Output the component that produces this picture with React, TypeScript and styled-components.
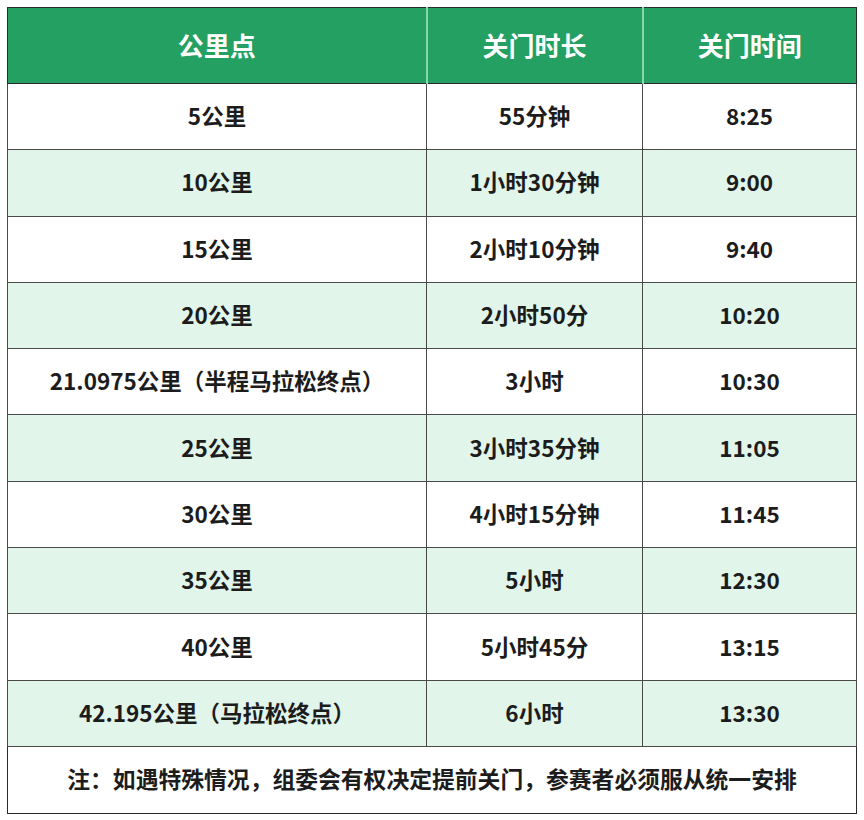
import React from 'react';
import styled, { createGlobalStyle } from 'styled-components';

type Row = { km: string; span: string; time: string };

const rows: Row[] = [
  { km: '5公里', span: '55分钟', time: '8:25' },
  { km: '10公里', span: '1小时30分钟', time: '9:00' },
  { km: '15公里', span: '2小时10分钟', time: '9:40' },
  { km: '20公里', span: '2小时50分', time: '10:20' },
  { km: '21.0975公里（半程马拉松终点）', span: '3小时', time: '10:30' },
  { km: '25公里', span: '3小时35分钟', time: '11:05' },
  { km: '30公里', span: '4小时15分钟', time: '11:45' },
  { km: '35公里', span: '5小时', time: '12:30' },
  { km: '40公里', span: '5小时45分', time: '13:15' },
  { km: '42.195公里（马拉松终点）', span: '6小时', time: '13:30' },
];

const App: React.FC = () => {
  return (
    <Page>
      <GlobalStyle />
      <Table>
        <colgroup>
          <col style={{ width: 419 }} />
          <col style={{ width: 216 }} />
          <col />
        </colgroup>
        <thead>
          <tr>
            <Th>公里点</Th>
            <Th>关门时长</Th>
            <Th>关门时间</Th>
          </tr>
        </thead>
        <tbody>
          {rows.map((r, i) => (
            <Tr key={r.km} $shaded={i % 2 === 1}>
              <Td>{r.km}</Td>
              <Td>{r.span}</Td>
              <Td>{r.time}</Td>
            </Tr>
          ))}
          <tr>
            <Note colSpan={3}>注：如遇特殊情况，组委会有权决定提前关门，参赛者必须服从统一安排</Note>
          </tr>
        </tbody>
      </Table>
    </Page>
  );
};

export default App;

const GlobalStyle = createGlobalStyle`
  body {
    margin: 0;
    background: #ffffff;
    font-family: "Noto Sans CJK SC", "Noto Sans", sans-serif;
  }
`;

const Page = styled.div`
  padding: 7px;
`;

const Table = styled.table`
  width: 850px;
  border-collapse: collapse;
  table-layout: fixed;
  border: 1.5px solid #2b2b2b;
`;

const Th = styled.th`
  height: 72px;
  padding: 0 0 3px;
  background: #23a062;
  color: #ffffff;
  font-size: 26px;
  font-weight: 700;
  text-align: center;
  border-bottom: 1.5px solid #2b2b2b;
  & + & {
    border-left: 2px solid #86d7a8;
  }
`;

const Tr = styled.tr<{ $shaded: boolean }>`
  background: ${(p) => (p.$shaded ? '#e1f5ea' : '#ffffff')};
`;

const Td = styled.td`
  height: 62.3px;
  padding: 0 0 3px;
  font-size: 22.5px;
  font-weight: 700;
  color: #1c1c1c;
  text-align: center;
  border: 1px solid #4a4a4a;
`;

const Note = styled.td`
  height: 63px;
  padding: 0 0 3px;
  font-size: 22.8px;
  font-weight: 700;
  color: #1c1c1c;
  text-align: center;
  background: #ffffff;
`;
